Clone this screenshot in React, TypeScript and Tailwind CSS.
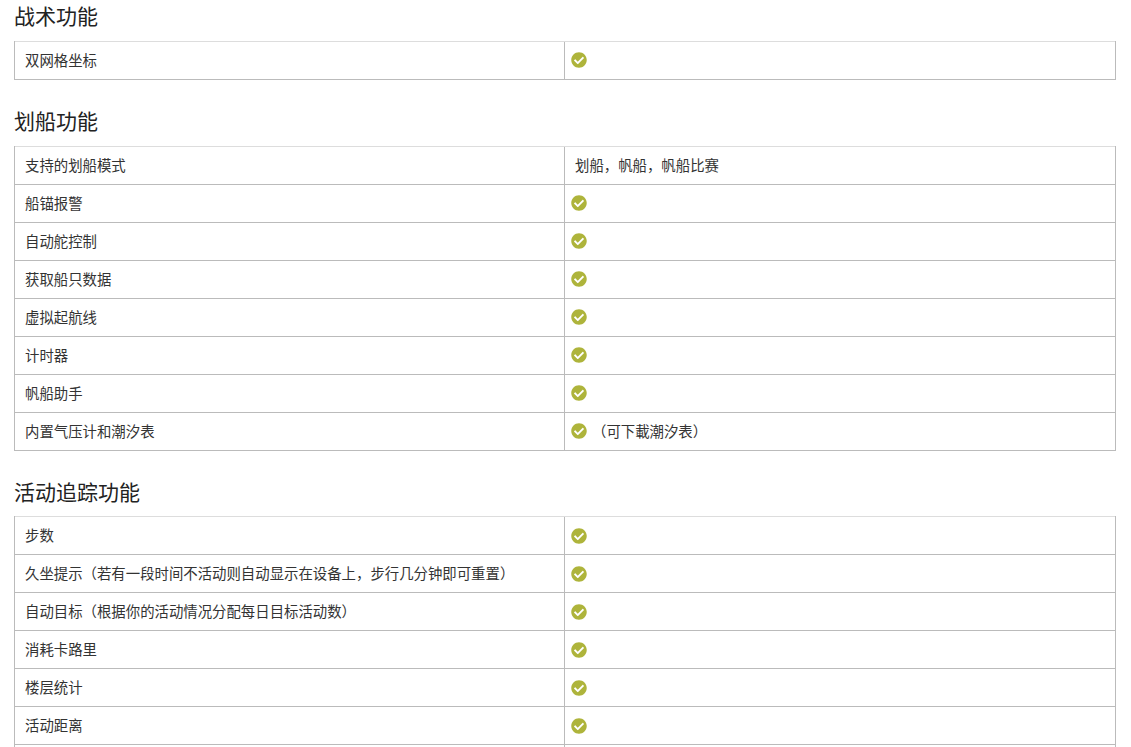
import React from 'react'
import { FaCheckCircle } from 'react-icons/fa'

const sections: { title: string; rows: [string, React.ReactNode][] }[] = [
    {
        title: '战术功能',
        rows: [['双网格坐标', true]],
    },
    {
        title: '划船功能',
        rows: [
            ['支持的划船模式', '划船，帆船，帆船比赛'],
            ['船锚报警', true],
            ['自动舵控制', true],
            ['获取船只数据', true],
            ['虚拟起航线', true],
            ['计时器', true],
            ['帆船助手', true],
            ['内置气压计和潮汐表', '（可下載潮汐表）'],
        ],
    },
    {
        title: '活动追踪功能',
        rows: [
            ['步数', true],
            ['久坐提示（若有一段时间不活动则自动显示在设备上，步行几分钟即可重置）', true],
            ['自动目标（根据你的活动情况分配每日目标活动数）', true],
            ['消耗卡路里', true],
            ['楼层统计', true],
            ['活动距离', true],
            ['', true],
        ],
    },
]

const Check = () => <FaCheckCircle className="inline-block shrink-0 text-[#aeb43b]" size={16} />

const Row: React.FC<{ label: string; value: React.ReactNode; first: boolean }> = ({ label, value, first }) => (
    <div className={`grid grid-cols-[549px_1fr] h-[38px] border-t ${first ? 'border-[#dddddd]' : 'border-[#bbbbbb]'}`}>
        <div className="flex items-center pl-[10px] pb-px">{label}</div>
        <div className="flex items-center pl-[6px] border-l border-[#bbbbbb] pb-px">
            {value === true && <Check />}
            {value !== true && label === '内置气压计和潮汐表' && <Check />}
            {value !== true && <span className={label === '内置气压计和潮汐表' ? 'ml-[5px]' : 'ml-[4px]'}>{value}</span>}
        </div>
    </div>
)

export default function App() {
    return (
        <div
            className="h-[747px] overflow-hidden bg-white pl-[14px] pr-[15px] text-[14.4px] text-[#333333]"
            style={{ fontFamily: '"Noto Sans CJK SC", "Liberation Sans", sans-serif' }}
        >
            {sections.map((section) => (
                <section key={section.title} className="mb-[24px] first:mb-[25px] last:mb-0 last:[&>h3]:pt-px last:[&_svg]:translate-y-px">
                    <h3 className="h-[41px] text-[21px] leading-[30px] font-normal text-[#222222]">{section.title}</h3>
                    <div className="border-x border-b border-[#bbbbbb]">
                        {section.rows.map(([label, value], i) => (
                            <Row key={i} label={label} value={value} first={i === 0} />
                        ))}
                    </div>
                </section>
            ))}
        </div>
    )
}
